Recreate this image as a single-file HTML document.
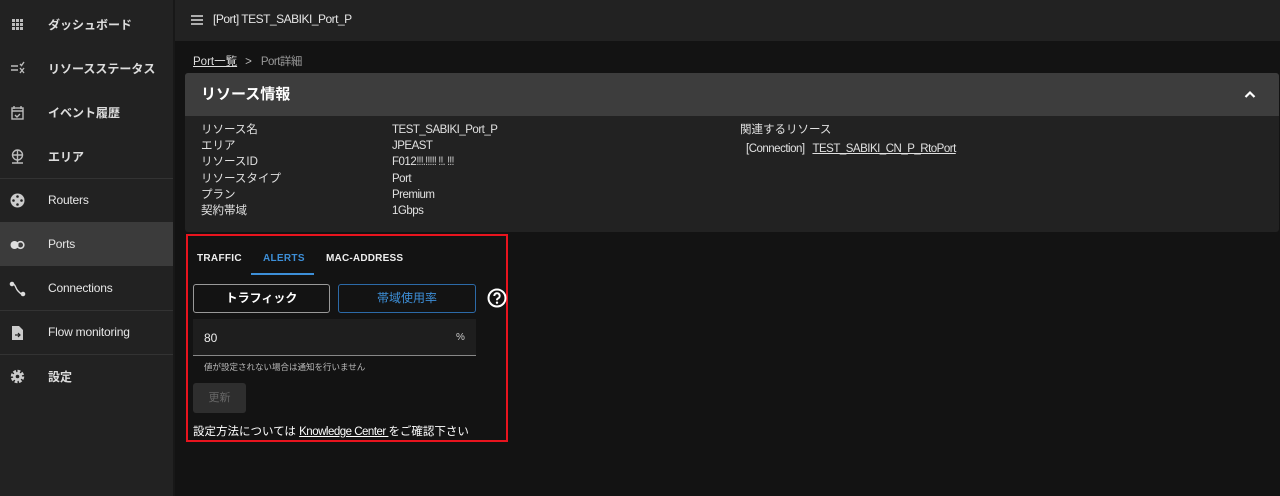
<!DOCTYPE html>
<html><head><meta charset="utf-8"><style>
*{margin:0;padding:0;box-sizing:border-box}
body{width:1280px;height:496px;background:#131313;font-family:"Liberation Sans","Noto Sans CJK JP",sans-serif;color:#e8e8e8;position:relative;overflow:hidden;font-size:12px}
.side{position:absolute;left:0;top:0;width:173px;height:496px;background:#222}
.sep{position:absolute;left:173px;top:0;width:2px;height:496px;background:#181818}
.it{position:absolute;left:0;width:173px;height:44px;display:flex;align-items:center}
.it .ic{position:absolute;left:9px;top:14px;width:17px;height:17px}
.it span{position:absolute;left:48px;font-size:12px;font-weight:bold;color:#ddd}
.it span.en{font-weight:normal;color:#e6e6e6;letter-spacing:-.2px}
.line{position:absolute;left:0;width:173px;height:1px;background:#333}
.top{position:absolute;left:175px;top:0;width:1105px;height:41px;background:#222}
.abs{position:absolute}
.card{position:absolute;left:185px;top:73px;width:1094px;height:159px;background:#222;border-radius:3px}
.hd{height:43px;background:#3d3d3d;border-radius:3px 3px 0 0;padding-left:16px;line-height:43px;font-size:15px;font-weight:bold;color:#fff}
.lab{position:absolute;font-size:11.5px;color:#e0e0e0;line-height:16.2px}
.n{letter-spacing:-.5px}
</style></head><body>
<div class="side">
 <div class="it" style="top:2px"><svg class="ic" viewBox="0 0 17 17" fill="#bbb"><rect x="3" y="3" width="3" height="3"/><rect x="7" y="3" width="3" height="3"/><rect x="11" y="3" width="3" height="3"/><rect x="3" y="7" width="3" height="3"/><rect x="7" y="7" width="3" height="3"/><rect x="11" y="7" width="3" height="3"/><rect x="3" y="11" width="3" height="3"/><rect x="7" y="11" width="3" height="3"/><rect x="11" y="11" width="3" height="3"/></svg><span>ダッシュボード</span></div>
 <div class="it" style="top:46px"><svg class="ic" viewBox="0 0 17 17" stroke="#bbb" stroke-width="1.4" fill="none"><path d="M2 6h7M2 10h7M11 8l4 5M15 8l-4 5M11 4l1.5 1.5L15 2"/></svg><span>リソースステータス</span></div>
 <div class="it" style="top:90px"><svg class="ic" viewBox="0 0 17 17" stroke="#bbb" stroke-width="1.4" fill="none"><rect x="3" y="4" width="11" height="11"/><path d="M5 2v3M12 2v3M3 7h11M6 11l2 2 3-3"/></svg><span>イベント履歴</span></div>
 <div class="it" style="top:134px"><svg class="ic" viewBox="0 0 17 17" stroke="#bbb" stroke-width="1.4" fill="none"><circle cx="8.5" cy="7" r="5"/><path d="M4 7h9M8.5 2v10M3 15h11M8.5 12v3"/></svg><span>エリア</span></div>
 <div class="line" style="top:178px"></div>
 <div class="it" style="top:178px"><svg class="ic" viewBox="0 0 17 17"><circle cx="8.5" cy="8.5" r="7" fill="#ccc"/><circle cx="8.5" cy="4.5" r="1.3" fill="#222"/><circle cx="8.5" cy="12.5" r="1.3" fill="#222"/><circle cx="4.5" cy="8.5" r="1.3" fill="#222"/><circle cx="12.5" cy="8.5" r="1.3" fill="#222"/></svg><span class="en">Routers</span></div>
 <div class="it" style="top:222px;background:#3b3b3b"><svg class="ic" viewBox="0 0 17 17"><circle cx="5.5" cy="9" r="4" fill="#ddd"/><circle cx="11.5" cy="9" r="3.3" fill="none" stroke="#ddd" stroke-width="1.6"/></svg><span class="en">Ports</span></div>
 <div class="it" style="top:266px"><svg class="ic" viewBox="0 0 17 17" stroke="#ddd" stroke-width="1.4" fill="none"><circle cx="3" cy="4" r="1.6" fill="#ddd"/><circle cx="14" cy="14" r="1.6" fill="#ddd"/><path d="M3 4c4 0 3 4 6 7s3 3 5 3"/></svg><span class="en">Connections</span></div>
 <div class="line" style="top:310px"></div>
 <div class="it" style="top:310px"><svg class="ic" viewBox="0 0 17 17"><path d="M3 2h7l4 4v10H3z" fill="#ccc"/><path d="M6 11h5M9 9l2 2-2 2" stroke="#222" stroke-width="1.2" fill="none"/></svg><span class="en">Flow monitoring</span></div>
 <div class="line" style="top:354px"></div>
 <div class="it" style="top:354px"><svg class="ic" viewBox="0 0 17 17"><circle cx="8.5" cy="8.5" r="5" fill="none" stroke="#ccc" stroke-width="3.5" stroke-dasharray="2.6 1.3"/><circle cx="8.5" cy="8.5" r="4.5" fill="#ccc"/><circle cx="8.5" cy="8.5" r="1.8" fill="#222"/></svg><span>設定</span></div>
</div>
<div class="sep"></div>
<div class="top"></div>
<svg class="abs" style="left:190px;top:14px" width="14" height="12" viewBox="0 0 14 12" stroke="#ddd" stroke-width="1.6"><path d="M1 2h12M1 6h12M1 10h12"/></svg>
<div class="abs n" style="left:213px;top:12px;font-size:12px;color:#e6e6e6">[Port] TEST_SABIKI_Port_P</div>
<div class="abs" style="left:193px;top:53px;font-size:11.5px"><span style="text-decoration:underline;color:#ddd">Port一覧</span><span style="color:#bbb;margin:0 9px 0 8px">&gt;</span><span style="color:#999" class="n">Port詳細</span></div>
<div class="card"><div class="hd">リソース情報</div>
<svg class="abs" style="left:1059px;top:17px" width="12" height="8" viewBox="0 0 12 8" stroke="#fff" stroke-width="2.2" fill="none"><path d="M1.5 7L6 2.5 10.5 7"/></svg>
</div>
<div class="lab" style="left:201px;top:122px">リソース名<br>エリア<br>リソースID<br>リソースタイプ<br>プラン<br>契約帯域</div>
<div class="lab n" style="left:392px;top:122px">TEST_SABIKI_Port_P<br>JPEAST<br>F012<span style="color:#bbb;letter-spacing:-1px">!!!.!!!!! !!. !!!</span><br>Port<br>Premium<br>1Gbps</div>
<div class="lab" style="left:740px;top:122px">関連するリソース</div>
<div class="lab n" style="left:746px;top:141px">[Connection]&nbsp;&nbsp; <span style="text-decoration:underline">TEST_SABIKI_CN_P_RtoPort</span></div>
<div class="abs" style="left:186px;top:234px;width:322px;height:208px;border:2px solid #e8141e"></div>
<div class="abs" style="left:197px;top:253px;font-size:10px;font-weight:bold;color:#eee;letter-spacing:.3px">TRAFFIC</div>
<div class="abs" style="left:263px;top:253px;font-size:10px;font-weight:bold;color:#3d8fd8;letter-spacing:.3px">ALERTS</div>
<div class="abs" style="left:251px;top:273px;width:63px;height:2px;background:#3d8fd8"></div>
<div class="abs" style="left:326px;top:253px;font-size:10px;font-weight:bold;color:#eee;letter-spacing:.2px">MAC-ADDRESS</div>
<div class="abs" style="left:193px;top:284px;width:137px;height:29px;border:1px solid #999;border-radius:3px;text-align:center;line-height:27px;font-size:12px;font-weight:bold;color:#fff">トラフィック</div>
<div class="abs" style="left:338px;top:284px;width:138px;height:29px;border:1px solid #2c6aa8;border-radius:3px;text-align:center;line-height:27px;font-size:12px;color:#3d8fd8">帯域使用率</div>
<svg class="abs" style="left:487px;top:288px" width="20" height="20" viewBox="0 0 20 20"><circle cx="10" cy="10" r="8.5" fill="none" stroke="#fff" stroke-width="2"/><path d="M7.3 8a2.7 2.7 0 1 1 3.7 2.4c-.8.4-1 .9-1 1.8" fill="none" stroke="#fff" stroke-width="2"/><circle cx="10" cy="14.7" r="1.2" fill="#fff"/></svg>
<div class="abs" style="left:193px;top:319px;width:283px;height:37px;background:#1e1e1e;border-bottom:1px solid #888"></div>
<div class="abs" style="left:204px;top:331px;font-size:12px;color:#eee">80</div>
<div class="abs" style="left:456px;top:332px;font-size:10px;color:#ccc">%</div>
<div class="abs" style="left:204px;top:361px;font-size:8.5px;color:#bbb">値が設定されない場合は通知を行いません</div>
<div class="abs" style="left:193px;top:383px;width:53px;height:30px;background:#2e2e2e;border-radius:3px;text-align:center;line-height:30px;font-size:11px;color:#666">更新</div>
<div class="abs" style="left:193px;top:423px;font-size:11.5px;color:#fff">設定方法については <span style="text-decoration:underline" class="n">Knowledge Center </span>をご確認下さい</div>
</body></html>
